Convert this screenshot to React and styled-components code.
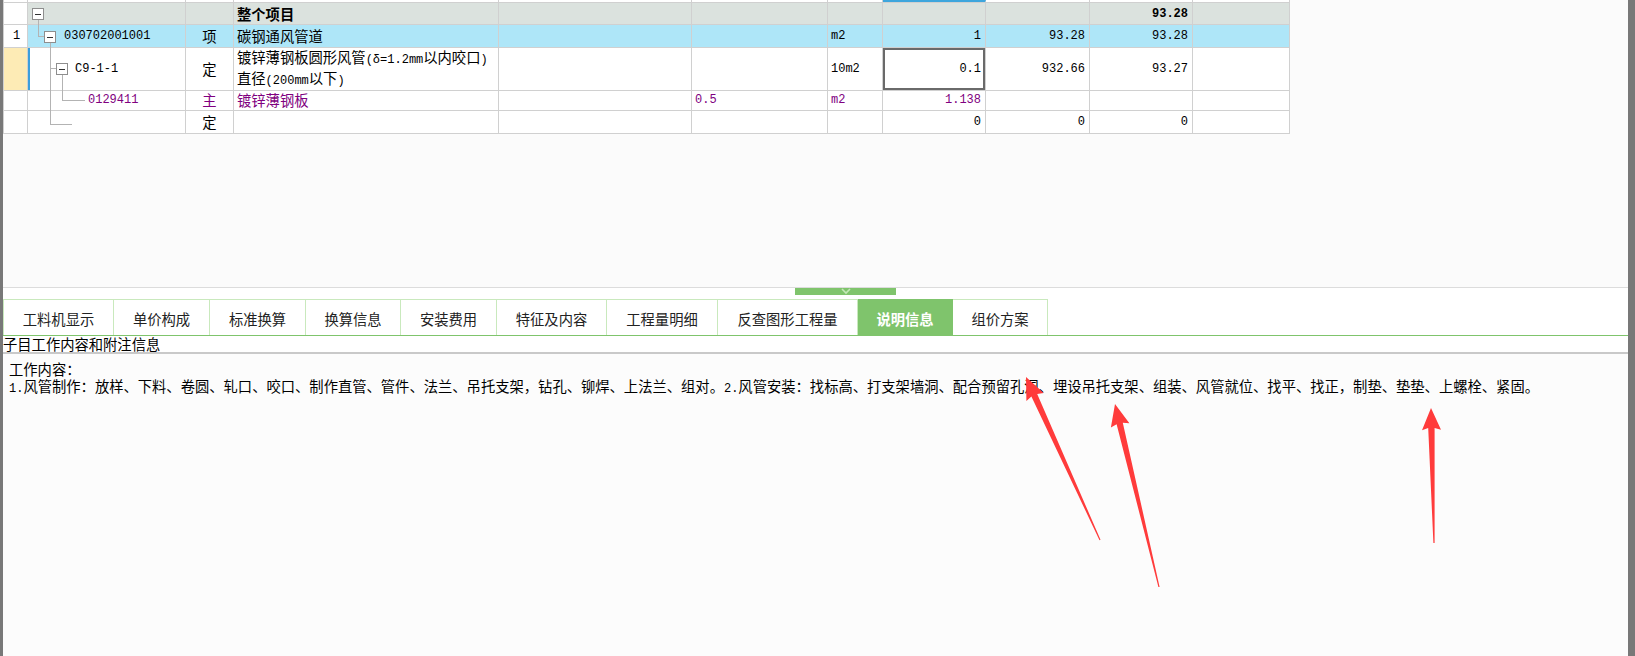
import React from 'react';
import styled, { createGlobalStyle } from 'styled-components';

const CJK = '"Noto Sans CJK SC", "Noto Sans", sans-serif';
const MONO = '"Liberation Mono", "DejaVu Sans Mono", monospace';
const COLS = '25px 158px 48px 265px 193px 136px 55px 103px 104px 103px 97px';
const PURPLE = '#800080';
const LINE = '#b3b3b3';

const Global = createGlobalStyle`
  html, body { margin: 0; padding: 0; background: #fbfbfb; }
  body { font-family: ${CJK}; font-size: 14.3px; color: #000; }
  * { box-sizing: border-box; }
`;

const Page = styled.div`
  position: relative;
  display: flex;
  width: 1635px;
  height: 656px;
  overflow: hidden;
`;

const Edge = styled.div`
  flex: 0 0 ${p => p.$w}px;
  background: #787878;
`;

const Main = styled.div`
  flex: 1;
  display: flex;
  flex-direction: column;
  min-width: 0;
`;

const TableArea = styled.div`
  height: 287px;
  background: #fbfbfb;
`;

const Table = styled.div`
  width: 1287px;
  display: flex;
  flex-direction: column;
`;

const Row = styled.div`
  display: grid;
  grid-template-columns: ${COLS};
  height: ${p => p.$h}px;
  background: ${p => p.$bg || '#fff'};
`;

const Cell = styled.div`
  position: relative;
  display: flex;
  align-items: center;
  justify-content: ${p => (p.$align === 'right' ? 'flex-end' : p.$align === 'center' ? 'center' : 'flex-start')};
  padding: 0 ${p => (p.$align === 'right' ? 4 : 3)}px 0 ${p => (p.$indent != null ? p.$indent : 3)}px;
  border-right: 1px solid #d0d0d0;
  border-bottom: 1px solid #d0d0d0;
  border-left: ${p => (p.$first ? '1px solid #d0d0d0' : 'none')};
  border-top: ${p => (p.$topMark ? '2px solid #3ea6dd' : 'none')};
  background: ${p => p.$bg || 'transparent'};
  color: ${p => p.$color || '#000'};
  font-weight: ${p => (p.$bold ? 700 : 400)};
  line-height: 18px;
  white-space: nowrap;
  box-shadow: ${p => (p.$sel ? 'inset 0 0 0 2px #6a6a6a' : p.$mark ? 'inset 2px 0 0 #3b9fdc' : 'none')};
`;

const Multi = styled.div`
  display: flex;
  flex-direction: column;
  line-height: 18px;
`;

const Mono = styled.span`
  font-family: ${MONO};
  font-size: 12px;
`;

const TreeSvg = styled.svg`
  position: absolute;
  left: 0;
  top: 0;
  pointer-events: none;
`;

const SplitBar = styled.div`
  height: 12px;
  border-top: 1px solid #dcdcdc;
  background: #fff;
`;

const Handle = styled.div`
  width: 101px;
  height: 7px;
  margin-left: 792px;
  background: #7fc46c;
  display: flex;
  justify-content: center;
`;

const TabBar = styled.div`
  display: flex;
  height: 37px;
  background: #fff;
  border-bottom: 1px solid #7fc46c;
`;

const Tab = styled.div`
  width: ${p => p.$w}px;
  height: 36px;
  display: flex;
  align-items: center;
  justify-content: center;
  padding-top: 2px;
  border-top: 1px solid ${p => (p.$active ? '#7fc46c' : '#c9e9bd')};
  border-right: 1px solid ${p => (p.$active ? '#7fc46c' : '#c9e9bd')};
  border-left: ${p => (p.$first ? '1px solid #c9e9bd' : 'none')};
  background: ${p => (p.$active ? '#7fc46c' : '#fff')};
  color: ${p => (p.$active ? '#fff' : '#222')};
  font-weight: ${p => (p.$active ? 700 : 400)};
  white-space: nowrap;
`;

const SubTitle = styled.div`
  height: 18px;
  line-height: 16px;
  background: #fff;
  border-bottom: 2px solid #c9c9c9;
  white-space: nowrap;
`;

const Content = styled.div`
  flex: 1;
  padding: 6px 0 0 6px;
  line-height: 17px;
  background: #fcfcfc;
  white-space: nowrap;
`;

const Overlay = styled.svg`
  position: absolute;
  left: 0;
  top: 0;
  pointer-events: none;
`;

function Box({ x, y }) {
  return (
    <g>
      <rect x={x + 0.5} y={y + 0.5} width={11} height={11} fill="#fff" stroke="#8e8e8e" />
      <line x1={x + 3} x2={x + 9} y1={y + 6.5} y2={y + 6.5} stroke="#333" />
    </g>
  );
}

function Tree({ kind, h }) {
  const L = (x1, y1, x2, y2, k) => <line key={k} x1={x1} y1={y1} x2={x2} y2={y2} stroke={LINE} />;
  let parts = [];
  if (kind === 'hdr') {
    parts = [L(10.5, 17, 10.5, h, 'a'), <Box key="b" x={4} y={5} />];
  } else if (kind === 'r1') {
    parts = [L(10.5, 0, 10.5, 12, 'a'), L(10.5, 11.5, 16, 11.5, 'b'), L(22.5, 17, 22.5, h, 'c'), <Box key="d" x={16} y={6} />];
  } else if (kind === 'r2') {
    parts = [L(22.5, 0, 22.5, h, 'a'), L(22.5, 20.5, 28, 20.5, 'b'), L(34.5, 26, 34.5, h, 'c'), <Box key="d" x={28} y={15} />];
  } else if (kind === 'r3') {
    parts = [L(22.5, 0, 22.5, h, 'a'), L(34.5, 0, 34.5, 11.5, 'b'), L(34.5, 11.5, 57, 11.5, 'c')];
  } else if (kind === 'r4') {
    parts = [L(22.5, 0, 22.5, 13.5, 'a'), L(22.5, 13.5, 44, 13.5, 'b')];
  }
  return (
    <TreeSvg width={158} height={h} viewBox={`0 0 158 ${h}`} shapeRendering="crispEdges">
      {parts}
    </TreeSvg>
  );
}

function arrowPoints(tail, tip) {
  const dx = tip[0] - tail[0];
  const dy = tip[1] - tail[1];
  const len = Math.hypot(dx, dy);
  const ux = dx / len, uy = dy / len;
  const nx = -uy, ny = ux;
  const H = 20, W = 9.5, w1 = 3.2, w0 = 0.6;
  const bx = tip[0] - ux * H, by = tip[1] - uy * H;
  const rx = tip[0] - ux * (H + 2), ry = tip[1] - uy * (H + 2);
  const p = [
    [tail[0] + nx * w0, tail[1] + ny * w0],
    [bx + nx * w1, by + ny * w1],
    [rx + nx * W, ry + ny * W],
    tip,
    [rx - nx * W, ry - ny * W],
    [bx - nx * w1, by - ny * w1],
    [tail[0] - nx * w0, tail[1] - ny * w0],
  ];
  return p.map(q => `${q[0].toFixed(1)},${q[1].toFixed(1)}`).join(' ');
}

const ARROWS = [
  { tail: [1100, 540], tip: [1026, 377] },
  { tail: [1159, 587], tip: [1115, 404] },
  { tail: [1434, 543], tip: [1431, 408] },
];

const TABS = [
  ['工料机显示', 111],
  ['单价构成', 96],
  ['标准换算', 96],
  ['换算信息', 95],
  ['安装费用', 96],
  ['特征及内容', 110],
  ['工程量明细', 111],
  ['反查图形工程量', 140],
  ['说明信息', 95],
  ['组价方案', 95],
];

function EmptyCells({ from, to, bg }) {
  const out = [];
  for (let i = from; i <= to; i++) out.push(<Cell key={i} $bg={bg} />);
  return out;
}

export default function App() {
  return (
    <Page>
      <Global />
      <Edge $w={3} />
      <Main>
        <TableArea>
          <Table>
            <Row $h={3}>
              <Cell $first />
              <EmptyCells from={1} to={6} />
              <Cell $topMark />
              <EmptyCells from={8} to={10} />
            </Row>
            <Row $h={22} $bg="#dbe2de">
              <Cell $first $bg="#fff" />
              <Cell><Tree kind="hdr" h={22} /></Cell>
              <Cell />
              <Cell $bold>整个项目</Cell>
              <Cell />
              <Cell />
              <Cell />
              <Cell />
              <Cell />
              <Cell $align="right" $bold><Mono>93.28</Mono></Cell>
              <Cell />
            </Row>
            <Row $h={23} $bg="#aee6f8">
              <Cell $first $bg="#fff" $indent={9}><Mono>1</Mono></Cell>
              <Cell $indent={36}><Tree kind="r1" h={23} /><Mono>030702001001</Mono></Cell>
              <Cell $align="center">项</Cell>
              <Cell>碳钢通风管道</Cell>
              <Cell />
              <Cell />
              <Cell><Mono>m2</Mono></Cell>
              <Cell $align="right"><Mono>1</Mono></Cell>
              <Cell $align="right"><Mono>93.28</Mono></Cell>
              <Cell $align="right"><Mono>93.28</Mono></Cell>
              <Cell />
            </Row>
            <Row $h={41}>
              <Cell $first $bg="#fdebb5" />
              <Cell $indent={47} $mark><Tree kind="r2" h={41} /><Mono>C9-1-1</Mono></Cell>
              <Cell $align="center">定</Cell>
              <Cell>
                <Multi>
                  <span>镀锌薄钢板圆形风管<Mono>(δ=1.2mm</Mono>以内咬口<Mono>)</Mono></span>
                  <span>直径<Mono>(200mm</Mono>以下<Mono>)</Mono></span>
                </Multi>
              </Cell>
              <Cell />
              <Cell />
              <Cell><Mono>10m2</Mono></Cell>
              <Cell $align="right" $sel><Mono>0.1</Mono></Cell>
              <Cell $align="right"><Mono>932.66</Mono></Cell>
              <Cell $align="right"><Mono>93.27</Mono></Cell>
              <Cell />
            </Row>
            <Row $h={22}>
              <Cell $first />
              <Cell $indent={60} $color={PURPLE}><Tree kind="r3" h={22} /><Mono>0129411</Mono></Cell>
              <Cell $align="center" $color={PURPLE}>主</Cell>
              <Cell $color={PURPLE}>镀锌薄钢板</Cell>
              <Cell />
              <Cell $color={PURPLE}><Mono>0.5</Mono></Cell>
              <Cell $color={PURPLE}><Mono>m2</Mono></Cell>
              <Cell $align="right" $color={PURPLE}><Mono>1.138</Mono></Cell>
              <Cell />
              <Cell />
              <Cell />
            </Row>
            <Row $h={23}>
              <Cell $first />
              <Cell><Tree kind="r4" h={23} /></Cell>
              <Cell $align="center">定</Cell>
              <Cell />
              <Cell />
              <Cell />
              <Cell />
              <Cell $align="right"><Mono>0</Mono></Cell>
              <Cell $align="right"><Mono>0</Mono></Cell>
              <Cell $align="right"><Mono>0</Mono></Cell>
              <Cell />
            </Row>
          </Table>
        </TableArea>
        <SplitBar>
          <Handle>
            <svg width="12" height="7" viewBox="0 0 12 7">
              <polyline points="2,1 6,5 10,1" fill="none" stroke="#c4e8b8" strokeWidth="1.6" />
            </svg>
          </Handle>
        </SplitBar>
        <TabBar>
          {TABS.map(([label, w], i) => (
            <Tab key={label} $w={w} $first={i === 0} $active={label === '说明信息'}>{label}</Tab>
          ))}
        </TabBar>
        <SubTitle>子目工作内容和附注信息</SubTitle>
        <Content>
          <div>工作内容：</div>
          <div>
            <Mono>1.</Mono>风管制作：放样、下料、卷圆、轧口、咬口、制作直管、管件、法兰、吊托支架，钻孔、铆焊、上法兰、组对。<Mono>2.</Mono>风管安装：找标高、打支架墙洞、配合预留孔洞、埋设吊托支架、组装、风管就位、找平、找正，制垫、垫垫、上螺栓、紧固。
          </div>
        </Content>
      </Main>
      <Edge $w={7} />
      <Overlay width={1635} height={656} viewBox="0 0 1635 656">
        {ARROWS.map((a, i) => (
          <polygon key={i} points={arrowPoints(a.tail, a.tip)} fill="#ff3b3b" />
        ))}
      </Overlay>
    </Page>
  );
}
